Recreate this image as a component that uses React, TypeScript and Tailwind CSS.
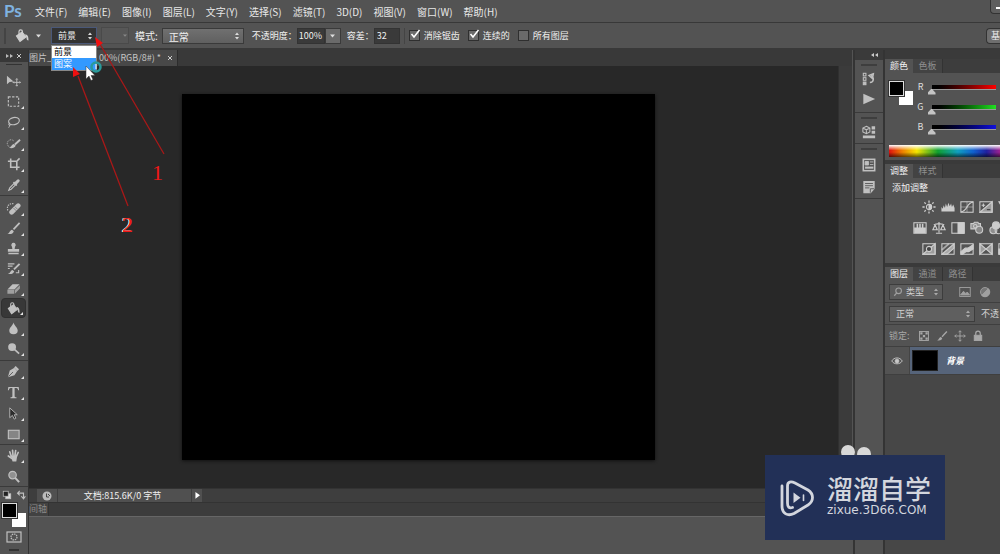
import type { ReactNode } from "react";

const MENUS = [
  "文件(F)",
  "编辑(E)",
  "图像(I)",
  "图层(L)",
  "文字(Y)",
  "选择(S)",
  "滤镜(T)",
  "3D(D)",
  "视图(V)",
  "窗口(W)",
  "帮助(H)",
];

type IconProps = { children: ReactNode; className?: string; box?: string };

function Icon({ children, className = "size-4", box = "0 0 16 16" }: IconProps) {
  return (
    <svg
      viewBox={box}
      className={`shrink-0 ${className}`}
      fill="none"
      stroke="currentColor"
      strokeWidth="1.2"
      aria-hidden="true"
    >
      {children}
    </svg>
  );
}

const bucket = (
  <>
    <path d="M2.5 8 L8 4 L12 9 L6 13.5 Z" fill="currentColor" />
    <path d="M5 7 V3.5 a1.7 1.7 0 0 1 3.4 0 V8" />
    <path d="M11 6.5 c2.5 0 3.5 1.5 3.5 6 c-1.5 0 -2 -1 -2 -3 Z" fill="currentColor" stroke="none" />
  </>
);

const brush = (
  <>
    <path d="M14.5 2 L8 9" strokeWidth="1.8" />
    <path d="M1.5 13.5 c2.5 0 2 -3.5 5 -4.2 l1.8 1.6 c-.6 2.8 -4 3.6 -6.8 2.6 Z" fill="currentColor" stroke="none" />
  </>
);

const TOOLS: { name: string; icon: ReactNode; more?: boolean; active?: boolean }[][] = [
  [
    {
      name: "移动工具",
      icon: (
        <>
          <path d="M1 3 V12 L3.8 9.5 L8 9 Z" fill="currentColor" stroke="none" />
          <path d="M11.5 6 V14 M7.5 10 H15.5 M10.5 7 l1 -1 l1 1 M10.5 13 l1 1 l1 -1 M8.5 9 l-1 1 l1 1 M14.5 9 l1 1 l-1 1" strokeWidth="1" />
        </>
      ),
    },
    { name: "矩形选框工具", more: true, icon: <rect x="2.5" y="3" width="11" height="10" strokeDasharray="2.5 1.5" /> },
    {
      name: "套索工具",
      more: true,
      icon: (
        <>
          <ellipse cx="8.5" cy="6.5" rx="5.8" ry="3.8" transform="rotate(-12 8.5 6.5)" />
          <path d="M4 8.5 c-2 1 -1 3 .5 2.5 c1.5 -.8 -.5 -2 -.8 0 c0 1.2 -.2 2 -.9 2.5" strokeWidth="1" />
        </>
      ),
    },
    {
      name: "快速选择工具",
      more: true,
      icon: (
        <>
          <path d="M8 5 a4 4 0 1 0 -3 7" strokeDasharray="1.5 1.2" strokeWidth="0.9" />
          <path d="M15 4 L9.5 9" strokeWidth="2" />
          <path d="M3 12.5 c3 -.2 2.5 -3.5 5.5 -4 l1.8 1.6 c-.8 2.8 -4.5 3.4 -7.3 2.4 Z" fill="currentColor" stroke="none" />
        </>
      ),
    },
    { name: "裁剪工具", more: true, icon: <path d="M5 1.5 V11 H14.5 M2 4.5 H11.5 V14 M12 4 L14.5 1.5" strokeWidth="1.7" /> },
    {
      name: "吸管工具",
      more: true,
      icon: (
        <>
          <path d="M3 13 L4 10.5 L9 5.5 L10.5 7 L5.5 12 Z" />
          <path d="M8 4.5 L11.5 8" strokeWidth="1.8" />
          <path d="M10 6 L13 3" strokeWidth="3.2" strokeLinecap="round" />
        </>
      ),
    },
  ],
  [
    {
      name: "污点修复画笔工具",
      more: true,
      icon: (
        <>
          <path d="M6 12 L13 5" strokeWidth="5" strokeLinecap="round" />
          <path d="M2 10 a5 5 0 0 1 6 -7" strokeDasharray="1.5 1" />
          <path d="M8 7.5 l3 3 M9.5 6 l3 3" stroke="#535353" strokeWidth="0.6" />
        </>
      ),
    },
    { name: "画笔工具", more: true, icon: brush },
    {
      name: "仿制图章工具",
      more: true,
      icon: (
        <path
          d="M8 2 a2.3 2.3 0 0 1 1.6 4 L9.2 8.5 H14 V11.5 H2 V8.5 H6.8 L6.4 6 A2.3 2.3 0 0 1 8 2 Z M2.5 12.5 H13.5 V14 H2.5 Z"
          fill="currentColor"
          stroke="none"
        />
      ),
    },
    {
      name: "历史记录画笔工具",
      more: true,
      icon: (
        <>
          <path d="M14.5 3 L8.5 9" strokeWidth="2" />
          <path d="M2 13.5 c2.5 0 2.5 -3.5 5 -4 l1.8 1.6 c-.8 2.4 -4 3.4 -6.8 2.4 Z" fill="currentColor" stroke="none" />
          <path d="M2 3 h7 M2 5.5 h5 M2 8 h2 M10.5 12.5 h3 v-3" strokeWidth="1.2" />
        </>
      ),
    },
    {
      name: "橡皮擦工具",
      more: true,
      icon: (
        <>
          <path d="M1.5 9 L7 3.5 H14.5 L9 9 Z" fill="currentColor" stroke="none" />
          <path d="M1.5 9.7 H8.8 V13.5 H1.5 Z M9.5 9.7 L14.8 4.5 V8 L9.5 13.5 Z" fill="currentColor" fillOpacity="0.7" stroke="none" />
        </>
      ),
    },
    { name: "油漆桶工具", more: true, active: true, icon: bucket },
    { name: "模糊工具", more: true, icon: <path d="M8 1.5 C9 5 12.5 7 12.5 10 a4.5 4 0 0 1 -9 0 C3.5 7 7 5 8 1.5 Z" fill="currentColor" stroke="none" /> },
    {
      name: "减淡工具",
      more: true,
      icon: (
        <>
          <circle cx="6.5" cy="6.5" r="4.2" fill="currentColor" stroke="none" />
          <path d="M9 9 L14 13.5" strokeWidth="1.8" />
        </>
      ),
    },
  ],
  [
    {
      name: "钢笔工具",
      more: true,
      icon: (
        <>
          <path d="M2 14 L4 7 L9 4 L12 7.5 L9 12 Z" fill="currentColor" stroke="none" />
          <path d="M9.5 3 L13 6.5" strokeWidth="2.4" />
          <path d="M2.5 13.5 L7.5 8.5" stroke="#535353" strokeWidth="0.9" />
        </>
      ),
    },
    {
      name: "横排文字工具",
      more: true,
      icon: (
        <path
          d="M2.5 2 H13.5 L14 5.5 H13 C12.5 3.5 12 3.3 9.2 3.3 V12 c0 .8 .5 1 2 1.1 V14 H4.8 V13.1 c1.5 -.1 2 -.3 2 -1.1 V3.3 C4 3.3 3.5 3.5 3 5.5 H2 Z"
          fill="currentColor"
          stroke="none"
        />
      ),
    },
    { name: "路径选择工具", more: true, icon: <path d="M4 2 V12.5 L6.8 10 L8.8 14 L10.5 13 L8.8 9.3 H12 Z" fill="#2c2c2c" strokeWidth="0.9" /> },
    { name: "矩形工具", more: true, icon: <rect x="2.5" y="3.5" width="11.5" height="9" fill="#858585" /> },
  ],
  [
    {
      name: "抓手工具",
      more: true,
      icon: (
        <>
          <path d="M5.5 8.5 L4 4 M7.5 8 L7 2.5 M9.5 8 L10.3 2.8 M11 9 L13 4.8 M6 11 L2.5 8.5" strokeWidth="1.8" strokeLinecap="round" />
          <path d="M4.8 8 H12 L11 14.5 H7 Z" fill="currentColor" stroke="none" />
        </>
      ),
    },
    {
      name: "缩放工具",
      icon: (
        <>
          <circle cx="7" cy="6.5" r="4" fill="#909090" />
          <path d="M9.8 9.5 L14 14" strokeWidth="2.2" />
        </>
      ),
    },
  ],
];

function Toolbar() {
  return (
    <aside className="box-content flex w-7 shrink-0 flex-col border-r border-[#333] bg-[#535353] text-[#c0c0c0]">
      <div className="flex h-3 items-center justify-between bg-[#383838] px-1.5">
        <svg viewBox="0 0 8 6" className="w-2 fill-[#bbb]"><path d="M0 1 L3 3 L0 5 Z M4 1 L7 3 L4 5 Z" /></svg>
        <svg viewBox="0 0 6 6" className="w-1.5 stroke-[#ccc]"><path d="M1 1 L5 5 M5 1 L1 5" /></svg>
      </div>
      <div className="mx-1.5 mt-0.5 mb-[5px] h-px bg-[#333]" />
      {TOOLS.map((group, g) => (
        <div
          key={g}
          className={
            g === 1
              ? "flex flex-col border-b border-[#3a3a3a] py-0.5"
              : "flex flex-col gap-px border-b border-[#3a3a3a] last-of-type:border-0"
          }
        >
          {group.map((tool) => (
            <button
              key={tool.name}
              aria-label={tool.name}
              className={
                tool.active
                  ? "relative mr-0.5 ml-px flex h-5 items-center justify-center rounded-sm border border-[#303030] bg-[#383838]"
                  : "relative mr-0.5 ml-px flex h-5 items-center justify-center"
              }
            >
              <Icon className="size-[15px]">{tool.icon}</Icon>
              {tool.more && (
                <svg viewBox="0 0 3 3" className="absolute right-0.5 bottom-0.5 size-[3px] fill-[#e6e6e6]"><path d="M3 0 V3 H0 Z" /></svg>
              )}
            </button>
          ))}
        </div>
      ))}
      <div className="mt-0.5 mb-0.5 flex justify-between px-0.5 py-px">
        <Icon className="size-2.5">
          <rect x="6" y="6" width="8" height="8" fill="#ddd" />
          <rect x="2" y="2" width="8" height="8" fill="#222" />
        </Icon>
        <Icon className="size-2.5">
          <path d="M3 5 H12 V13 M6 1.5 L2.5 5 L6 8.5 M8.5 10 L12 14 L15 10" strokeWidth="1.8" />
        </Icon>
      </div>
      <Swatches />
      <button aria-label="快速蒙版" className="mt-1 flex justify-center">
        <Icon className="h-3 w-4" box="0 0 16 12">
          <rect x="1" y="1" width="14" height="10" />
          <circle cx="8" cy="6" r="3" strokeDasharray="1.5 0.8" />
        </Icon>
      </button>
      <div className="mx-auto mt-1.5 h-0.5 w-2.5 bg-[#333]" />
    </aside>
  );
}

function Swatches() {
  return (
    <div className="relative ml-0.5 h-6 w-6 shrink-0">
      <div className="absolute right-0 bottom-0 size-3.5 bg-white" />
      <div className="absolute top-0 left-0 size-[15px] border border-[#ddd] bg-black outline outline-[#333]" />
    </div>
  );
}

function Updown({ className = "" }: { className?: string }) {
  return (
    <svg viewBox="0 0 6 8" className={`pointer-events-none absolute right-1 w-1.5 fill-[#ddd] ${className}`}>
      <path d="M1 3 L3 0.5 L5 3 Z M1 5 L3 7.5 L5 5 Z" />
    </svg>
  );
}

function Check({ label, checked = false }: { label: string; checked?: boolean }) {
  return (
    <label className="flex items-center gap-1">
      <span className="relative flex">
        <input
          type="checkbox"
          defaultChecked={checked}
          className="peer size-[11px] appearance-none border border-[#2f2f2f] bg-[#6a6a6a]"
        />
        <svg viewBox="0 0 12 12" className="pointer-events-none absolute -top-0.5 left-0 hidden size-3 stroke-white peer-checked:block" fill="none" strokeWidth="1.5">
          <path d="M2.5 6 L5 9 L10.5 2" />
        </svg>
      </span>
      {label}
    </label>
  );
}

function OptionsBar() {
  return (
    <div className="flex h-[27px] shrink-0 items-center border-b-2 border-[#393939] bg-[#535353] text-[9px] text-[#f0f0f0]">
      <div className="ml-1 h-4 w-0.5 border-x border-[#444]" />
      <button aria-label="油漆桶工具" className="ml-2 flex items-center gap-1.5 text-[#cfcfcf]">
        <Icon>{bucket}</Icon>
        <svg viewBox="0 0 5 4" className="w-[5px] fill-[#ddd]"><path d="M0 0.5 H5 L2.5 3.5 Z" /></svg>
      </button>
      <div className="relative z-20 ml-2.5 flex items-center">
        <select aria-label="填充区域的源" className="h-[17px] w-[46px] appearance-none border border-[#4a5878] bg-[#333] pl-1.5 outline-none">
          <option>前景</option>
          <option>图案</option>
        </select>
        <Updown />
        <ul role="listbox" className="absolute top-[18px] left-0 w-[46px] border border-[#888] bg-white text-black">
          <li role="option" aria-selected="false" className="h-3 pl-0.5 leading-3">前景</li>
          <li role="option" aria-selected="true" className="h-3 bg-[#3399ff] pl-0.5 leading-3 text-white">图案</li>
        </ul>
      </div>
      <button disabled aria-label="图案拾色器" className="ml-1 flex h-[17px] w-7 items-center justify-end border border-[#4a4a4a] bg-[#575757] pr-px">
        <svg viewBox="0 0 5 4" className="w-1 fill-[#888]"><path d="M0 0.5 H5 L2.5 3.5 Z" /></svg>
      </button>
      <label className="ml-1.5 flex items-center gap-1 text-[10px]">
        模式:
        <span className="relative flex items-center">
          <select className="h-4 w-[82px] appearance-none border border-[#3a3a3a] bg-linear-to-b from-[#707070] to-[#606060] pl-1.5">
            <option>正常</option>
          </select>
          <Updown />
        </span>
      </label>
      <label className="ml-2 flex items-center gap-1">
        不透明度：
        <input defaultValue="100%" className="-ml-1 h-4 w-7 border border-[#333] bg-[#3a3a3a] pl-px" />
      </label>
      <button aria-label="不透明度滑块" className="flex h-4 w-4 items-center justify-center border border-[#3a3a3a] bg-[#6a6a6a]">
        <svg viewBox="0 0 5 4" className="w-[5px] fill-[#ddd]"><path d="M0 0.5 H5 L2.5 3.5 Z" /></svg>
      </button>
      <label className="ml-1.5 flex items-center">
        容差：
        <input defaultValue="32" className="h-4 w-[26px] border border-[#333] bg-[#3a3a3a] pl-0.5" />
      </label>
      <div className="mx-1 h-4 w-px bg-[#444]" />
      <div className="flex gap-2">
        <Check label="消除锯齿" checked />
        <Check label="连续的" checked />
        <Check label="所有图层" />
      </div>
      <button className="ml-auto h-4 w-3.5 overflow-hidden rounded-l-sm border border-r-0 border-[#333] bg-[#6e6e6e] pl-1 text-left whitespace-nowrap">基</button>
    </div>
  );
}

function Document() {
  return (
    <main className="flex min-w-0 flex-1 flex-col">
      <div className="flex h-4 bg-[#393939]">
        <div className="flex w-[149px] items-center justify-between border-r border-[#2c2c2c] bg-[#484848] pr-1 text-[9px] text-[#c4c4c4]">
          <span>图片_</span>
          <span className="flex items-center gap-1.5 whitespace-nowrap">
            00%(RGB/8#) *
            <button aria-label="关闭" className="flex">
              <svg viewBox="0 0 6 6" className="w-1.5 stroke-[#ccc]"><path d="M1 1 L5 5 M5 1 L1 5" /></svg>
            </button>
          </span>
        </div>
      </div>
      <div className="flex flex-1 bg-[#282828]">
        <div className="flex flex-1 items-center justify-center pr-[30px]">
          <div className="h-[366px] w-[473px] bg-black shadow-[0_1px_3px_#111]" />
        </div>
        <div className="w-3.5 border-l border-[#303030] bg-[#3b3b3b]" />
      </div>
      <div className="flex h-3.5 items-stretch border-t border-[#333] bg-[#3e3e3e] text-[9px] text-[#f0f0f0]">
        <div className="ml-2 flex w-5 items-center justify-center bg-[#505050]">
          <svg viewBox="0 0 10 10" className="w-2.5"><circle cx="5" cy="5" r="4.5" fill="#bbb" /><path d="M4.5 2.5 V6 H7 M6 3 l2 2" stroke="#444" fill="none" /></svg>
        </div>
        <div className="ml-px flex w-[133px] items-center justify-center bg-[#505050] pr-1">文档:815.6K/0 字节</div>
        <button aria-label="状态栏选项" className="ml-px flex w-2.5 items-center justify-center bg-[#505050]">
          <svg viewBox="0 0 6 8" className="w-[5px] shrink-0 fill-white"><path d="M0.5 0 L6 4 L0.5 8 Z" /></svg>
        </button>
      </div>
      <div className="flex h-[15px] border-t border-b border-[#333] border-b-[#666] bg-[#3c3c3c] text-[9px]">
        <div className="w-5 border-r border-[#333] bg-[#424242] leading-3 whitespace-nowrap text-[#8a8a8a]">间轴</div>
      </div>
      <div className="h-[37px] bg-[#535353]" />
    </main>
  );
}

function Dock() {
  return (
    <aside className="ml-px flex w-8 shrink-0 flex-col border-x-2 border-[#343434] bg-[#535353] text-[#c0c0c0]">
      <div className="flex h-2.5 items-center justify-end bg-[#3a3a3a] pr-1">
        <svg viewBox="0 0 8 6" className="w-2 fill-[#ccc]"><path d="M3 1 L0 3 L3 5 Z M7 1 L4 3 L7 5 Z" /></svg>
      </div>
      <div className="flex flex-col items-center gap-1.5 border-b border-[#3a3a3a] pt-1 pb-1.5">
        <div className="h-0.5 w-4 bg-[#3e3e3e]" />
        <Icon className="size-3.5">
          <rect x="1.5" y="1.5" width="3" height="3" />
          <rect x="1.5" y="6.5" width="3" height="3" />
          <rect x="1.5" y="11.5" width="3" height="3" fill="currentColor" />
          <path d="M9 12 c5 0 5 -6 1.5 -8 M13 2 L8 4 L12 7.5 Z" strokeWidth="1.6" />
        </Icon>
        <Icon className="size-3.5"><path d="M1.5 2 L15 8 L1.5 14 Z" fill="currentColor" stroke="none" /></Icon>
      </div>
      <div className="flex flex-col items-center gap-1.5 border-b border-[#3a3a3a] pt-1 pb-1">
        <div className="h-0.5 w-4 bg-[#3e3e3e]" />
        <Icon className="size-3.5">
          <path d="M5 1.5 L9 3.5 V8 L5 10 L1 8 V3.5 Z M1 3.5 L5 5.5 L9 3.5 M5 5.5 V10" />
          <path d="M11 1.5 h4 v3.5 h-4 Z M11 6.5 h4 v3.5 h-4 Z M1 12 h14 v3 h-14 Z" fill="currentColor" stroke="none" />
        </Icon>
      </div>
      <div className="flex flex-col items-center gap-2 border-b border-[#3a3a3a] pt-1 pb-1">
        <div className="h-0.5 w-4 bg-[#3e3e3e]" />
        <Icon className="size-3.5">
          <rect x="1.5" y="1.5" width="13" height="13" strokeWidth="1.8" />
          <path d="M3.5 4 h4 v4 h-4 Z M9 4.5 h4 M9 7.5 h4" fill="currentColor" strokeWidth="1" />
          <path d="M3.5 11 h9.5" strokeWidth="2.4" />
        </Icon>
        <Icon className="size-3.5">
          <path d="M1.5 1 H14.5 V10 L10 15 H1.5 Z" fill="currentColor" stroke="none" />
          <path d="M3.5 4 h9 M3.5 6.5 h9 M3.5 9 h5 M9.5 14.5 V10 H14" stroke="#535353" strokeWidth="1" />
        </Icon>
      </div>
    </aside>
  );
}

function Tabs({ names }: { names: string[] }) {
  return (
    <div role="tablist" className="flex h-3.5 shrink-0 bg-[#3d3d3d] text-[9px] text-[#8f8f8f]">
      {names.map((name, i) => (
        <button
          key={name}
          role="tab"
          aria-selected={i === 0}
          className={
            i === 0
              ? "w-7 shrink-0 bg-[#535353] leading-3 text-[#f2f2f2]"
              : "w-[30px] shrink-0 border-r border-[#333] bg-[#434343] leading-3"
          }
        >
          {name}
        </button>
      ))}
    </div>
  );
}

function ColorPanel() {
  const track =
    "h-3 w-full appearance-none bg-transparent [&::-webkit-slider-runnable-track]:h-[5px] [&::-webkit-slider-runnable-track]:border-b [&::-webkit-slider-runnable-track]:border-[#999] [&::-webkit-slider-thumb]:mt-1 [&::-webkit-slider-thumb]:-ml-1 [&::-webkit-slider-thumb]:h-1.5 [&::-webkit-slider-thumb]:w-2 [&::-webkit-slider-thumb]:appearance-none [&::-webkit-slider-thumb]:bg-[#c4c4c4] [&::-webkit-slider-thumb]:[clip-path:polygon(50%_0,100%_70%,100%_100%,0_100%,0_70%)]";
  return (
    <section className="border-b-4 border-[#3a3a3a]">
      <Tabs names={["颜色", "色板"]} />
      <div className="flex pt-2">
        <div className="ml-0.5 w-[30px] shrink-0">
          <Swatches />
        </div>
        <div className="flex flex-1 flex-col gap-2 pr-1 text-[9px] text-[#ddd]">
          <label className="flex h-3 items-center gap-2">
            <span className="w-2 text-right">R</span>
            <input type="range" min="0" max="255" defaultValue="0" className={`${track} [&::-webkit-slider-runnable-track]:bg-linear-to-r [&::-webkit-slider-runnable-track]:from-black [&::-webkit-slider-runnable-track]:to-[#f00]`} />
          </label>
          <label className="flex h-3 items-center gap-2">
            <span className="w-2 text-right">G</span>
            <input type="range" min="0" max="255" defaultValue="0" className={`${track} [&::-webkit-slider-runnable-track]:bg-linear-to-r [&::-webkit-slider-runnable-track]:from-black [&::-webkit-slider-runnable-track]:to-[#1fe01f]`} />
          </label>
          <label className="flex h-3 items-center gap-2">
            <span className="w-2 text-right">B</span>
            <input type="range" min="0" max="255" defaultValue="0" className={`${track} [&::-webkit-slider-runnable-track]:bg-linear-to-r [&::-webkit-slider-runnable-track]:from-black [&::-webkit-slider-runnable-track]:to-[#11d]`} />
          </label>
        </div>
      </div>
      <div className="mt-3 mb-[3px] ml-1 h-3 bg-[linear-gradient(to_bottom,#fff_0%,transparent_45%,transparent_60%,#0009_100%),linear-gradient(to_right,#e01010,#f08000_12%,#f5e600_25%,#10a030_44%,#10a0c0_62%,#1060d0_76%,#2020a0_88%,#a02090)]" />
    </section>
  );
}

const frame = <rect x="1" y="2" width="14" height="12" />;

const ADJUSTMENTS: ReactNode[][] = [
  [
    <>
      <circle cx="8" cy="8" r="3" />
      <path d="M8 5 a3 3 0 0 1 0 6 Z" fill="currentColor" />
      <path d="M8 0.5 V3 M8 13 V15.5 M0.5 8 H3 M13 8 H15.5 M2.7 2.7 L4.3 4.3 M11.7 11.7 L13.3 13.3 M13.3 2.7 L11.7 4.3 M2.7 13.3 L4.3 11.7" strokeWidth="1.5" />
    </>,
    <path d="M0.5 13 V8 L2 10 L3 6 L4.5 9 L5.5 4 L7 8 L8.5 3 L10 7 L11.5 4 L12.5 8 L14 5 L15.5 9 V13 Z" fill="currentColor" stroke="none" />,
    <>{frame}<path d="M1 13.5 C9 13 7 3 15 2.5" strokeWidth="1.5" /><path d="M1 8 H15 M8 2 V14" strokeWidth="0.6" /></>,
    <>{frame}<path d="M1 14 L15 2 V14 Z" fill="currentColor" fillOpacity="0.6" /><path d="M3 6 h4 M5 4 v4" strokeWidth="1.3" /><path d="M9 11 h4" stroke="#444" strokeWidth="1.3" /></>,
    <path d="M1 2 H15 L8 14 Z" fill="currentColor" />,
  ],
  [
    <>{frame}<path d="M2 8 H14 V13 H2 Z" fill="currentColor" /><path d="M5 3 V8 M8 3 V8 M11 3 V8" strokeWidth="1.8" /></>,
    <path d="M8 1 V13 M4.5 14 H11.5 M2 4 L8 3 L14 4 M1 10 L3.5 4.5 L6 10 Z M10 10 L12.5 4.5 L15 10 Z" strokeWidth="1.3" />,
    <>{frame}<path d="M8 2 H15 V14 H8 Z" fill="currentColor" /></>,
    <><path d="M1 3 H4 L5 1.5 H9 L10 3 H12 V9 H1 Z" fill="currentColor" fillOpacity="0.5" /><circle cx="10.5" cy="10" r="4" fill="#888" /><circle cx="6" cy="6" r="2" /></>,
    <><circle cx="8" cy="5" r="4" fill="currentColor" /><circle cx="5" cy="10.5" r="4" fill="currentColor" fillOpacity="0.5" /><circle cx="11" cy="10.5" r="4" /></>,
  ],
  [
    <>{frame}<path d="M1 14 L15 2 V14 Z" fill="currentColor" fillOpacity="0.6" /><circle cx="8" cy="8" r="3" fill="#444" /></>,
    <>{frame}<path d="M1 14 L15 2 V7 L7 14 Z" fill="currentColor" fillOpacity="0.7" /><path d="M1 9 L9 2" strokeWidth="2" strokeOpacity="0.7" /></>,
    <>{frame}<path d="M1 11 L6 7 H9 L15 3 V8 L10 11 H7 L3 14 H1 Z" fill="currentColor" /></>,
    <>{frame}<path d="M1 2 L8 8 L1 14 Z M15 2 L8 8 L15 14 Z" fill="currentColor" fillOpacity="0.6" /></>,
    <>{frame}<path d="M1 8 H15 V14 H1 Z" fill="currentColor" /></>,
  ],
];

function AdjustPanel() {
  return (
    <section className="border-b-4 border-[#3a3a3a]">
      <Tabs names={["调整", "样式"]} />
      <h2 className="pt-1 pl-[7px] text-[9px] leading-3 text-[#f2f2f2]">添加调整</h2>
      <div className="flex flex-col gap-[7px] pt-1.5 pb-[7px] text-[#cdcdcd]">
        {ADJUSTMENTS.map((row, r) => (
          <div key={r} className={r === 1 ? "flex gap-[5px] pl-7" : "flex gap-[5px] pl-[37px]"}>
            {row.map((icon, i) => (
              <Icon key={i} className="size-3.5">{icon}</Icon>
            ))}
          </div>
        ))}
      </div>
    </section>
  );
}

function LayersPanel() {
  return (
    <section className="flex flex-1 flex-col text-[9px] text-[#d0d0d0]">
      <Tabs names={["图层", "通道", "路径"]} />
      <div className="flex h-[22px] shrink-0 items-center border-b border-[#3f3f3f] pl-1 text-[#a0a0a0]">
        <span className="relative flex items-center">
          <Icon className="absolute left-1 size-2.5">
            <circle cx="9" cy="6" r="4.5" strokeWidth="1.8" />
            <path d="M6 9.5 L2 14" strokeWidth="2" />
          </Icon>
          <select aria-label="滤镜类型" className="h-4 w-[54px] appearance-none border border-[#3d3d3d] bg-[#5c5c5c] pl-4 text-[#cfcfcf]">
            <option>类型</option>
          </select>
          <Updown className="opacity-60" />
        </span>
        <div className="ml-4 flex items-center gap-2">
          <Icon className="size-3"><rect x="1" y="2" width="14" height="12" /><path d="M2 12 L6 7 L9 10 L11 8 L14 12 Z" fill="currentColor" /></Icon>
          <Icon className="size-3"><circle cx="8" cy="8" r="6" fill="#777" /><path d="M3.5 12.5 A6 6 0 0 0 12.5 3.5 Z" fill="currentColor" /></Icon>
          <Icon className="size-3"><path d="M2 3 H14 M8 3 V14" strokeWidth="2" /></Icon>
        </div>
      </div>
      <div className="flex h-[22px] shrink-0 items-center border-b border-[#3f3f3f] pl-1">
        <span className="relative flex items-center">
          <select aria-label="混合模式" className="h-4 w-[86px] appearance-none border border-[#3d3d3d] bg-[#5f5f5f] pl-1.5">
            <option>正常</option>
          </select>
          <Updown className="opacity-60" />
        </span>
        <span className="ml-1.5 whitespace-nowrap">不透</span>
      </div>
      <div className="flex h-[22px] shrink-0 items-center border-b border-[#3f3f3f] pl-1 text-[#a8a8a8]">
        锁定:
        <div className="ml-2 flex gap-1.5">
          <Icon className="size-3"><rect x="2" y="2" width="12" height="12" /><path d="M3 3 h3 v3 h-3 Z M10 3 h3 v3 h-3 Z M6.5 6.5 h3 v3 h-3 Z M3 10 h3 v3 h-3 Z M10 10 h3 v3 h-3 Z" fill="currentColor" stroke="none" /></Icon>
          <Icon className="size-3">{brush}</Icon>
          <Icon className="size-3"><path d="M8 1 V15 M1 8 H15 M6 3 L8 1 L10 3 M6 13 L8 15 L10 13 M3 6 L1 8 L3 10 M13 6 L15 8 L13 10" /></Icon>
          <Icon className="size-3"><rect x="3" y="7" width="10" height="7" fill="currentColor" /><path d="M5 7 V4.5 a3 3 0 0 1 6 0 V7" strokeWidth="1.6" /></Icon>
        </div>
      </div>
      <div className="flex h-7 shrink-0 items-stretch border-b border-[#3f3f3f]">
        <button aria-label="图层可见性" className="flex w-6 items-center justify-center text-[#c8c8c8]">
          <Icon className="size-3"><path d="M1 8 C4 2.5 12 2.5 15 8 C12 13 4 13 1 8 Z" /><circle cx="8" cy="8" r="2.5" fill="currentColor" /></Icon>
        </button>
        <div className="flex flex-1 items-center gap-2 border-l border-[#444] bg-[#56647a] pl-0.5 font-bold text-white italic">
          <div className="h-[21px] w-[26px] border border-[#222] bg-black" />
          背景
        </div>
      </div>
      <div className="flex-1 bg-[#474747]" />
    </section>
  );
}

function Watermark() {
  return (
    <>
      <div className="absolute right-[129px] bottom-[93px] z-20 flex gap-0.5">
        <div className="size-3.5 rounded-full bg-[#d8d8d8]" />
        <div className="mt-0.5 size-3.5 rounded-full bg-[#d8d8d8]" />
      </div>
      <div className="absolute right-[55px] bottom-3.5 z-30 flex h-[85px] w-[180px] items-center gap-3 bg-[#223057] pl-3.5 text-[#d3d6de]">
        <svg viewBox="0 0 36 38" className="w-9 shrink-0" fill="none" stroke="currentColor" strokeLinecap="round" strokeLinejoin="round">
          <path d="M3 7 V27 C3 35 9 37.5 15 34.5 L29 26 C35 22 35 15 29 11 L16 4 C12 2 8.5 2.5 8.5 7 V24 C8.5 28 10 29.5 13.5 28.5" strokeWidth="2.8" />
          <path d="M14.5 13.5 V24 L21.5 18.8 Z" fill="currentColor" stroke="none" />
          <path d="M24.5 16 V21.5" strokeWidth="1.6" />
        </svg>
        <div className="pb-1 whitespace-nowrap">
          <div className="text-[26px] leading-6 font-medium">溜溜自学</div>
          <div className="mt-1 font-['DejaVu_Sans',sans-serif] text-[12px] leading-3">zixue.3D66.COM</div>
        </div>
      </div>
    </>
  );
}

// Numbered red arrows pointing at the fill source menu
function Annotations() {
  return (
    <div className="pointer-events-none absolute top-0 left-0 z-30">
      <svg width="180" height="240" viewBox="0 0 180 240" fill="none">
        <path d="M164 154 L100 44 M128 206 L78 76" stroke="#a81818" strokeWidth="1.3" />
        <path d="M95 37 L103 43 L97 47 Z M73 67 L80 74 L73 77 Z" fill="#f01010" />
        <circle cx="96" cy="67" r="4.5" stroke="#2a9a9a" strokeWidth="2.5" />
        <path d="M96 64 V69" stroke="#fff" />
        <path d="M86 66 V79 L89 76 L91 80.5 L93 79.5 L91 75.5 H95 Z" fill="#fff" stroke="#333" strokeWidth="0.5" />
      </svg>
      <span className="absolute top-[161px] left-[152px] font-['Liberation_Serif',serif] text-[22px] leading-6 text-[#f01818]">1</span>
      <span className="absolute top-[213px] left-[122px] font-['Liberation_Serif',serif] text-[22px] leading-6 text-[#f01818] [text-shadow:-1px_0_0_#fff]">2</span>
    </div>
  );
}

export default function App() {
  return (
    <div className="relative flex min-h-screen flex-col overflow-hidden bg-[#535353] font-['Noto_Sans_CJK_SC',sans-serif]">
      <header className="flex h-[23px] shrink-0 items-center border-b border-[#383838] text-[10px] text-[#e8e8e8]">
        <span className="w-[35px] pl-1 font-[Lato,sans-serif] text-[17px] leading-5 font-bold text-[#7fb2e0]">Ps</span>
        <nav className="flex gap-[11px] whitespace-nowrap">
          {MENUS.map((menu) => (
            <button key={menu}>{menu}</button>
          ))}
        </nav>
        <button aria-label="最小化" className="ml-auto flex h-3.5 w-2.5 items-end justify-end self-start rounded-bl-sm border border-t-0 border-r-0 border-[#333] bg-[#5e5e5e] pb-1">
          <span className="h-0.5 w-1 bg-white" />
        </button>
      </header>
      <OptionsBar />
      <div className="flex flex-1">
        <Toolbar />
        <Document />
        <Dock />
        <aside className="flex w-[115px] shrink-0 flex-col overflow-hidden bg-[#535353]">
          <div className="h-[9px] shrink-0 bg-[#3a3a3a]" />
          <ColorPanel />
          <AdjustPanel />
          <LayersPanel />
        </aside>
      </div>
      <Watermark />
      <Annotations />
    </div>
  );
}
